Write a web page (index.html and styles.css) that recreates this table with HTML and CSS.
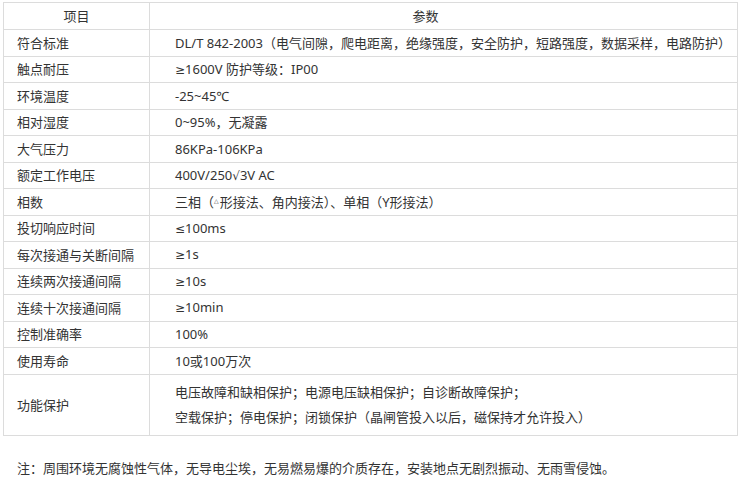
FILE: index.html
```html
<!DOCTYPE html>
<html lang="zh-CN">
<head>
<meta charset="utf-8">
<link rel="stylesheet" href="styles.css">
</head>
<body>
<div class="page">
  <table class="spec">
    <thead>
      <tr><th class="c1">项目</th><th class="c2">参数</th></tr>
    </thead>
    <tbody>
      <tr><td class="c1">符合标准</td><td class="c2">DL/T 842-2003（电气间隙，爬电距离，绝缘强度，安全防护，短路强度，数据采样，电路防护）</td></tr>
      <tr><td class="c1">触点耐压</td><td class="c2"><span class="sym">≥</span>1600V 防护等级：IP00</td></tr>
      <tr><td class="c1">环境温度</td><td class="c2">-25~45℃</td></tr>
      <tr><td class="c1">相对湿度</td><td class="c2">0~95%，无凝露</td></tr>
      <tr><td class="c1">大气压力</td><td class="c2">86KPa-106KPa</td></tr>
      <tr><td class="c1">额定工作电压</td><td class="c2">400V/250<span class="sym">√</span>3V AC</td></tr>
      <tr><td class="c1">相数</td><td class="c2">三相（<span class="tri">△</span>形接法、角内接法）、单相（Y形接法）</td></tr>
      <tr><td class="c1">投切响应时间</td><td class="c2"><span class="sym">≤</span>100ms</td></tr>
      <tr><td class="c1">每次接通与关断间隔</td><td class="c2"><span class="sym">≥</span>1s</td></tr>
      <tr><td class="c1">连续两次接通间隔</td><td class="c2"><span class="sym">≥</span>10s</td></tr>
      <tr><td class="c1">连续十次接通间隔</td><td class="c2"><span class="sym">≥</span>10min</td></tr>
      <tr><td class="c1">控制准确率</td><td class="c2">100%</td></tr>
      <tr><td class="c1">使用寿命</td><td class="c2">10或100万次</td></tr>
      <tr class="tall"><td class="c1">功能保护</td><td class="c2">电压故障和缺相保护；电源电压缺相保护；自诊断故障保护；<br>空载保护；停电保护；闭锁保护（晶闸管投入以后，磁保持才允许投入）</td></tr>
    </tbody>
  </table>
  <p class="note">注：周围环境无腐蚀性气体，无导电尘埃，无易燃易爆的介质存在，安装地点无剧烈振动、无雨雪侵蚀。</p>
</div>
</body>
</html>
```

FILE: styles.css
```css
html, body {
  margin: 0;
  padding: 0;
  background: #ffffff;
}

.page {
  padding: 2px 5px 0 3px;
  font-family: "Noto Sans", "Noto Sans CJK SC", sans-serif;
  font-size: 13px;
  color: #333333;
}

.spec {
  width: 735px;
  border-collapse: collapse;
  table-layout: fixed;
}

.spec th,
.spec td {
  border: 1px solid #dcdcdc;
  font-weight: normal;
  padding: 0;
  line-height: 18px;
  text-align: left;
  white-space: nowrap;
}

.spec thead tr {
  height: 27px;
}

.spec tbody tr {
  height: 26.5px;
}

.spec tbody tr.tall {
  height: 61.5px;
}

.spec .c1 {
  width: 145px;
  padding-left: 13px;
}

.spec .c2 {
  padding-left: 25px;
}

.spec th.c1 {
  text-align: center;
  padding: 0;
}

.spec th.c2 {
  text-align: center;
  padding: 0 36px 0 0;
}

.spec tr.tall .c2 {
  line-height: 25px;
}

.sym {
  font-family: "DejaVu Sans", sans-serif;
  font-size: 12px;
}

.tri {
  font-family: "DejaVu Sans", sans-serif;
  font-size: 6px;
  vertical-align: 4px;
  margin-right: 1px;
}

.note {
  margin: 22px 0 0 14px;
  line-height: 20px;
}
```
